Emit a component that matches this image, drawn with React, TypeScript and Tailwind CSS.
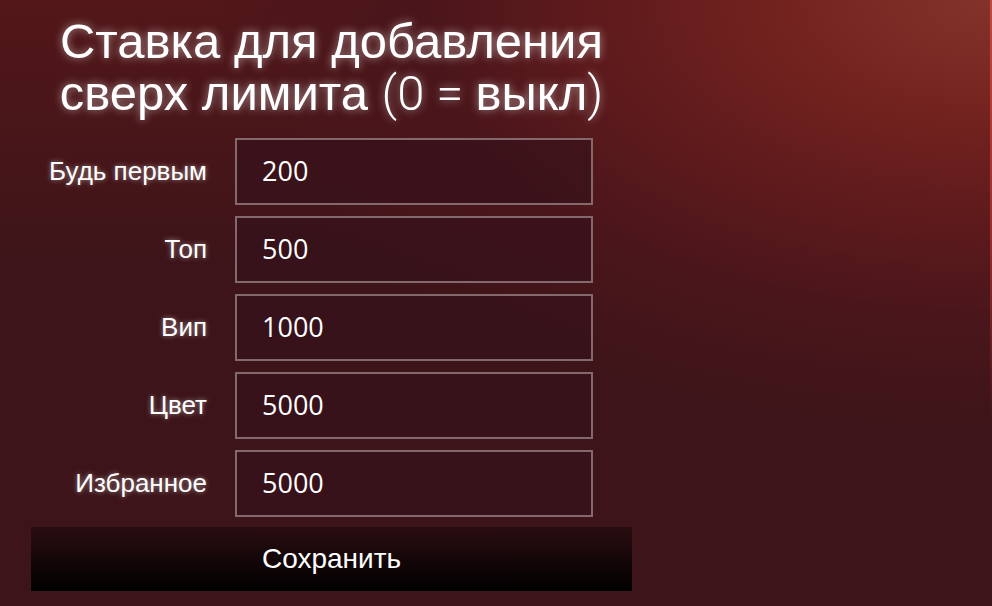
import React from "react";

const rows = [
  { label: "Будь первым", value: "200" },
  { label: "Топ", value: "500" },
  { label: "Вип", value: "1000" },
  { label: "Цвет", value: "5000" },
  { label: "Избранное", value: "5000" },
];

export default function App() {
  return (
    <div className="relative w-[992px] h-[606px] overflow-hidden bg-[radial-gradient(ellipse_800px_440px_at_100%_0%,#84332b_0%,#74231f_25%,#5e1a1c_50%,#4a161b_72%,rgba(60,20,25,0)_100%),linear-gradient(to_bottom,#531719_0%,#3c1419_45%)] font-['Liberation_Sans',Arial,sans-serif]">
      <div className="absolute right-0 top-0 w-[2px] h-[420px] bg-[linear-gradient(to_bottom,#c8463c,#a03030_50%,transparent)]" />
      <div className="ml-[31px] w-[601px] flex flex-col">
        <h1 className="mt-[15px] text-center text-white text-[49px] leading-[52px] [text-shadow:0_0_8px_rgba(255,255,255,0.55)]">
          Ставка для добавления
          <br />
          сверх лимита{" "}
          <span className="font-['Roboto',sans-serif] font-light">(0 = </span>
          выкл
          <span className="font-['Roboto',sans-serif] font-light">)</span>
        </h1>
        <div className="mt-[18px] flex flex-col gap-[11px]">
          {rows.map((r) => (
            <div key={r.label} className="flex items-center">
              <div className="w-[176px] text-right text-white text-[26px] font-['Liberation_Sans',Arial,sans-serif] [text-shadow:0_0_5px_rgba(255,255,255,0.5)]">
                {r.label}
              </div>
              <div className="ml-[28px] w-[358px] h-[67px] border-2 border-[#84696c] bg-[#33111a]/60 flex items-center pl-[25px] text-white text-[27px] font-['Open_Sans',sans-serif]">
                {r.value}
              </div>
            </div>
          ))}
        </div>
        <button className="mt-[10px] h-[64px] w-[601px] bg-[linear-gradient(to_bottom,#2a0d11,#000000)] text-white text-[28px] font-['Liberation_Sans',Arial,sans-serif]">
          Сохранить
        </button>
      </div>
    </div>
  );
}
